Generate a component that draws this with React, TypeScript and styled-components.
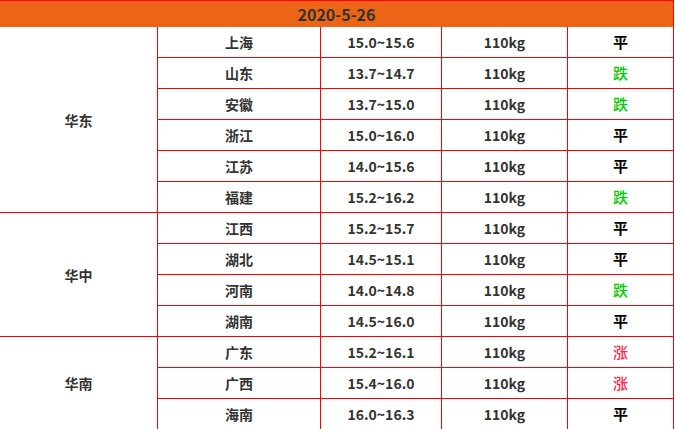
import React from "react";
import styled, { createGlobalStyle } from "styled-components";

type Trend = "平" | "跌" | "涨";

interface IPrice {
  city: string;
  range: string;
  weight: string;
  trend: Trend;
}

interface IRegion {
  name: string;
  items: IPrice[];
}

const regions: IRegion[] = [
  {
    name: "华东",
    items: [
      { city: "上海", range: "15.0~15.6", weight: "110kg", trend: "平" },
      { city: "山东", range: "13.7~14.7", weight: "110kg", trend: "跌" },
      { city: "安徽", range: "13.7~15.0", weight: "110kg", trend: "跌" },
      { city: "浙江", range: "15.0~16.0", weight: "110kg", trend: "平" },
      { city: "江苏", range: "14.0~15.6", weight: "110kg", trend: "平" },
      { city: "福建", range: "15.2~16.2", weight: "110kg", trend: "跌" },
    ],
  },
  {
    name: "华中",
    items: [
      { city: "江西", range: "15.2~15.7", weight: "110kg", trend: "平" },
      { city: "湖北", range: "14.5~15.1", weight: "110kg", trend: "平" },
      { city: "河南", range: "14.0~14.8", weight: "110kg", trend: "跌" },
      { city: "湖南", range: "14.5~16.0", weight: "110kg", trend: "平" },
    ],
  },
  {
    name: "华南",
    items: [
      { city: "广东", range: "15.2~16.1", weight: "110kg", trend: "涨" },
      { city: "广西", range: "15.4~16.0", weight: "110kg", trend: "涨" },
      { city: "海南", range: "16.0~16.3", weight: "110kg", trend: "平" },
    ],
  },
];

// column widths incl. the right border
const columns = [158, 163, 121, 126, 106];

const GlobalStyle = createGlobalStyle`
  html, body {
    margin: 0;
    padding: 0;
    background: #ffffff;
    overflow: hidden;
  }
`;

const Page = styled.div`
  width: 675px;
  height: 429px;
  overflow: hidden;
  font-family: "Noto Sans CJK SC", "Open Sans", sans-serif;
`;

const PriceTable = styled.table`
  border-collapse: separate;
  border-spacing: 0;
  table-layout: fixed;
  width: 674px;
`;

const Col = styled.col<{ $width: number }>`
  width: ${(p) => p.$width}px;
`;

const HeaderCell = styled.th`
  height: 26px;
  padding: 0;
  background: #ec6415;
  border-top: 1px solid #ff0000;
  border-right: 1px solid #ff0000;
  color: #333333;
  font-size: 16px;
  font-weight: bold;
  text-align: center;
  line-height: 26px;
`;

const Cell = styled.td`
  box-sizing: border-box;
  height: 31px;
  padding: 0;
  border-right: 1px solid #ff0000;
  border-bottom: 1px solid #ff0000;
  color: #333333;
  font-size: 14px;
  font-weight: bold;
  text-align: center;
  vertical-align: middle;
  line-height: 30px;
`;

const TrendCell = styled(Cell)<{ $trend: Trend }>`
  font-weight: ${(p) => (p.$trend === "平" ? "bold" : "500")};
  font-size: 15px;
  color: ${(p) =>
    p.$trend === "涨" ? "#ff2050" : p.$trend === "跌" ? "#00cc00" : "#000000"};
`;

const App = () => {
  return (
    <>
      <GlobalStyle />
      <Page>
        <PriceTable>
          <colgroup>
            {columns.map((w, i) => (
              <Col key={i} $width={w} />
            ))}
          </colgroup>
          <thead>
            <tr>
              <HeaderCell colSpan={5}>2020-5-26</HeaderCell>
            </tr>
          </thead>
          <tbody>
            {regions.map((region) =>
              region.items.map((item, i) => (
                <tr key={region.name + item.city}>
                  {i === 0 && <Cell rowSpan={region.items.length}>{region.name}</Cell>}
                  <Cell>{item.city}</Cell>
                  <Cell>{item.range}</Cell>
                  <Cell>{item.weight}</Cell>
                  <TrendCell $trend={item.trend}>{item.trend}</TrendCell>
                </tr>
              ))
            )}
          </tbody>
        </PriceTable>
      </Page>
    </>
  );
};

export default App;
